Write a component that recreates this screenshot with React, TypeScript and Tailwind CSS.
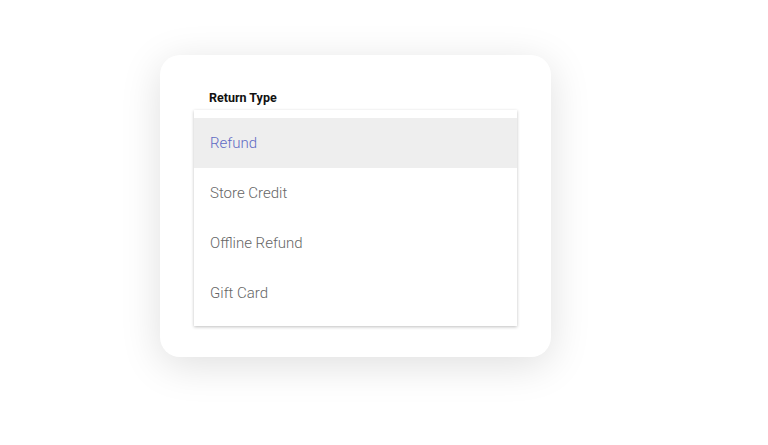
import React from 'react'

const options = [
  { label: 'Refund', selected: true },
  { label: 'Store Credit', selected: false },
  { label: 'Offline Refund', selected: false },
  { label: 'Gift Card', selected: false },
]

export default function App() {
  return (
    <div className="h-[445px] w-[768px] bg-white pt-[55px] pl-[160px] font-['Roboto',sans-serif]">
      <div className="w-[391px] h-[302px] rounded-[20px] bg-white shadow-[0_8px_40px_rgba(0,0,0,0.13)] pt-[36px] px-[34px]">
        <div className="pl-[15px] text-[12.5px] leading-[14px] font-bold text-[#111111]">Return Type</div>
        <ul className="mt-[5px] py-[8px] bg-white shadow-[0_1px_3px_rgba(0,0,0,0.25)]">
          {options.map((o) => (
            <li
              key={o.label}
              className={
                o.selected
                  ? 'h-[50px] flex items-center px-4 bg-[#eeeeee] text-[15px] font-light text-[#5f6bc4]'
                  : 'h-[50px] flex items-center px-4 text-[15px] font-light text-[#666666]'
              }
            >
              {o.label}
            </li>
          ))}
        </ul>
      </div>
    </div>
  )
}
